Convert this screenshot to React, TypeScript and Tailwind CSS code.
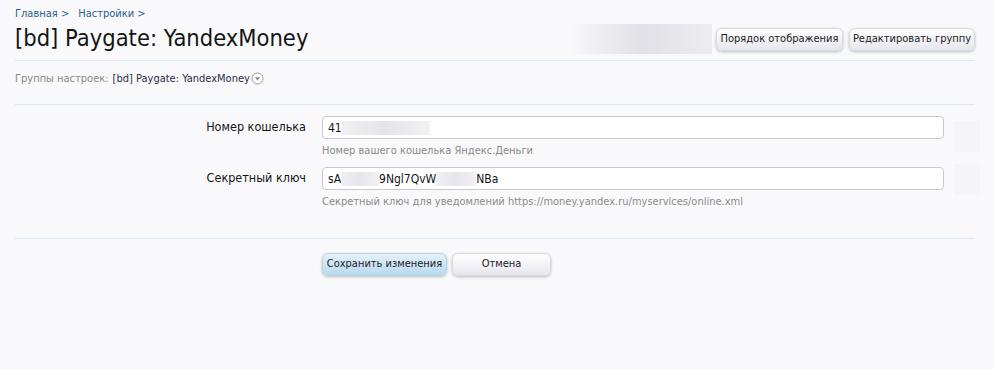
import React from "react";

const font = { fontFamily: '"DejaVu Sans Condensed", "DejaVu Sans", Verdana, sans-serif' };

function Blur({ w }: { w: number }) {
  return (
    <span
      className="inline-block h-[14px] align-middle bg-gradient-to-r from-[#f0f0f4] via-[#e4e4ea] to-[#f2f2f6]"
      style={{ width: w }}
    />
  );
}

function Btn({ children, primary, w }: { children: React.ReactNode; primary?: boolean; w: string }) {
  return (
    <button
      className={`h-[23px] ${w} whitespace-nowrap rounded-[6px] border text-[11px] text-[#222] shadow-[0_1px_3px_rgba(0,0,0,0.25)] ${
        primary
          ? "border-[#b8d2e6] bg-gradient-to-b from-[#e4f1fb] to-[#b9d9ef]"
          : "border-[#d9d9e2] bg-gradient-to-b from-[#ffffff] to-[#e6e6ee]"
      }`}
    >
      {children}
    </button>
  );
}

export default function App() {
  return (
    <div className="w-[994px] h-[369px] bg-[#f9f9fc] px-[15px] pt-[6px] text-[#141414]" style={font}>
      <div className="w-[960px]">
        <div className="text-[11px] text-[#2b5d8c] h-[16px] flex gap-[9px]">
          <span>Главная &gt;</span>
          <span>Настройки &gt;</span>
        </div>
        <div className="flex items-start justify-between h-[39px] border-b border-[#d7e7f5]">
          <h1 className="text-[23.5px] leading-[33px] text-[#141414]">[bd] Paygate: YandexMoney</h1>
          <div className="flex items-center gap-[6px] pt-[2px]">
            <div className="w-[140px] h-[30px] bg-gradient-to-r from-[#f8f8fb] via-[#e0e0e6] to-[#ececf1] mr-[-2px]" />
            <Btn w="w-[127px]">Порядок отображения</Btn>
            <Btn w="w-[126px]">Редактировать группу</Btn>
          </div>
        </div>
        <div className="h-[44px] border-b border-[#d7e7f5] flex items-start pt-[10px] text-[11px]">
          <span className="text-[#888]">Группы настроек:</span>
          <span className="ml-[4px] text-[#2b2b44]">[bd] Paygate: YandexMoney</span>
          <svg width="13" height="13" viewBox="0 0 13 13" className="ml-[1px] mt-[1px]">
            <circle cx="6.5" cy="6.5" r="5.5" fill="#fff" stroke="#999" />
            <path d="M3.8 5.2 L9.2 5.2 L6.5 8.4 Z" fill="#888" />
          </svg>
        </div>
        <div className="border-b border-[#d7e7f5] pt-[11px] pb-[27px] relative">
          <div className="flex items-start">
            <div className="w-[291px] text-right text-[12.5px] leading-[22px] pr-[0px]">Номер кошелька</div>
            <div className="ml-[16px]">
              <div className="w-[622px] h-[23px] bg-white border border-[#c8c8cf] rounded-[4px] flex items-center px-[5px] text-[12px]">
                41<Blur w={88} />
              </div>
              <div className="text-[11px] text-[#8a8a8a] mt-[4px] h-[24px]">Номер вашего кошелька Яндекс.Деньги</div>
            </div>
          </div>
          <div className="flex items-start">
            <div className="w-[291px] text-right text-[12.5px] leading-[22px]">Секретный ключ</div>
            <div className="ml-[16px]">
              <div className="w-[622px] h-[23px] bg-white border border-[#c8c8cf] rounded-[4px] flex items-center px-[5px] text-[12px] whitespace-pre">
                sA<Blur w={38} />9Ngl7QvW<Blur w={40} />NBa
              </div>
              <div className="text-[11px] text-[#8a8a8a] mt-[4px]">
                Секретный ключ для уведомлений https://money.yandex.ru/myservices/online.xml
              </div>
            </div>
          </div>
          <div className="absolute left-[939px] top-[16px] w-[26px] h-[31px] bg-[#f5f5f9]" />
          <div className="absolute left-[939px] top-[59px] w-[26px] h-[31px] bg-[#f5f5f9]" />
        </div>
        <div className="pl-[307px] pt-[14px] flex gap-[5px]">
          <Btn primary w="w-[125px]">Сохранить изменения</Btn>
          <Btn w="w-[99px]">Отмена</Btn>
        </div>
      </div>
    </div>
  );
}
